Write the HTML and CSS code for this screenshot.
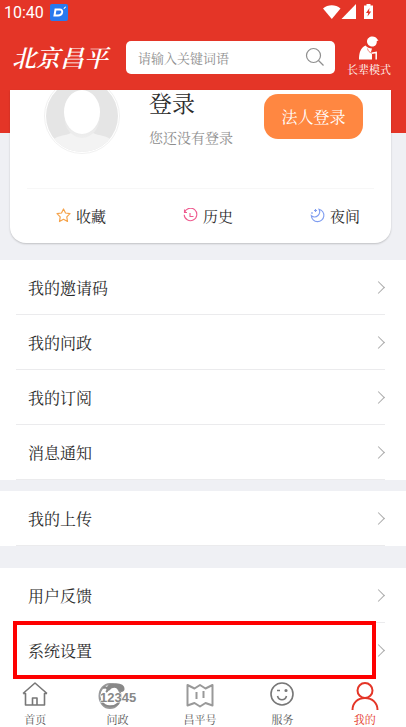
FILE: index.html
```
<!DOCTYPE html>
<html lang="zh-CN">

<head>
    <meta charset="UTF-8">
    <meta name="viewport" content="width=device-width, initial-scale=1">
    <title>北京昌平</title>
    <link rel="stylesheet" href="styles.css">
</head>

<body>
    <header class="top">
        <div class="status-bar">
            <span>10:40</span>
            <svg class="status-app" width="18" height="17" viewBox="0 0 18 17">
                <rect width="18" height="17" rx="2" fill="#2879ee"/>
                <path d="M5.500 5.500h4.200c2 0 2.800 1 2.400 3-.5 2.200-1.800 3-4 3H4.500z" fill="none" stroke="#fff" stroke-width="2"/>
                <path d="M14 5l.5-1.500 1.500-.5" fill="none" stroke="#fff"/>
            </svg>
            <svg class="status-icons" width="52" height="16" viewBox="0 0 52 16">
                <path d="M0 4.500C5 .2 12.500 .2 17.500 4.500L8.800 15z" fill="#fff"/>
                <path d="M33 0v15H18.500z" fill="#fff"/>
                <path d="M43.500 0h4v1.500H50V15h-9V1.500h2.500z" fill="#fff"/>
                <path d="M46.500 4l-3.500 5h2.200l-.7 3.500L48.200 7.500H46z" fill="#e43527"/>
            </svg>
        </div>
        <div class="toolbar">
            <h1 class="logo">北京昌平</h1>
            <form class="search">
                <input type="search" placeholder="请输入关键词语" aria-label="搜索">
                <button type="submit" aria-label="搜索">
                    <svg width="20" height="20" viewBox="0 0 20 20" fill="none" stroke="#8e8e8e" stroke-width="1.200">
                        <circle cx="8.500" cy="8.500" r="7"/>
                        <path d="M13.500 13.500l5 5"/>
                    </svg>
                </button>
            </form>
            <button type="button" class="elder">
                <svg width="20" height="24" viewBox="0 0 20 24" fill="#fff">
                    <path d="M8 5.500C8 2.500 10.500 .5 13.500 .5c2.300 0 4 .9 4.600 2.500l1.400 1.500-1.700.5c.2 3.300-1.600 5.500-4.300 5.500S8 8.500 8 5.500z"/>
                    <path d="M6.500 9.500c1.500 2 4 3 6.500 3l-1 3.500 1 2.500v5H0C0 17 1.500 12 6.500 9.500z"/>
                    <path d="M12.500 17.300l4.700-.8v7" fill="none" stroke="#fff" stroke-width="1.500"/>
                    <path d="M8.500 12.500c.5 2.500 2 4 4 4.500" fill="none" stroke="#e43527" stroke-width=".6"/>
                </svg>
                长辈模式
            </button>
        </div>
    </header>

    <main>
        <section class="profile">
            <div class="card">
                <div class="user">
                    <svg class="avatar" width="76" height="64" viewBox="0 12 76 64">
                        <defs>
                            <clipPath id="face"><circle cx="38" cy="38" r="36"/></clipPath>
                            <linearGradient id="shade" x1="0" y1="0" x2="0" y2="1">
                                <stop offset="0" stop-color="#dedede"/>
                                <stop offset="1" stop-color="#eeeeee"/>
                            </linearGradient>
                        </defs>
                        <circle cx="38" cy="38" r="37.500" fill="#fff" stroke="#f1f1f1"/>
                        <g clip-path="url(#face)">
                            <rect width="76" height="76" fill="#e5e5e5"/>
                            <path d="M28 46h20v8c3 4 13 2 19 8v14H9V62c6-6 16-4 19-8z" fill="#f3f3f3"/>
                            <ellipse cx="38" cy="38" rx="18" ry="22" fill="url(#shade)"/>
                            <ellipse cx="38" cy="34" rx="18" ry="22" fill="#fff"/>
                        </g>
                    </svg>
                    <div class="who">
                        <h2>登录</h2>
                        <p>您还没有登录</p>
                    </div>
                    <button type="button" class="corp-login">法人登录</button>
                </div>
                <nav class="quick">
                    <a href="#fav">
                        <svg width="15" height="15" viewBox="0 0 15 15" fill="none" stroke="#f5a34b" stroke-width="1.200" stroke-linejoin="round">
                            <path d="M7.500 1l2 4 4.500.7-3.200 3.200.7 4.600-4-2.200-4 2.200.7-4.600L1 5.700 5.500 5z"/>
                        </svg>
                        收藏
                    </a>
                    <a href="#history">
                        <svg width="15" height="15" viewBox="0 0 15 15" fill="none" stroke="#ee5a8e" stroke-width="1.100">
                            <path d="M1.500 4.500a6.300 6.300 0 1 1-.3 2.200M1.500 1.500v3H4M7 5v3.500h3.500"/>
                        </svg>
                        历史
                    </a>
                    <a href="#night">
                        <svg width="15" height="15" viewBox="0 0 15 15" fill="none" stroke="#7f9df0" stroke-width="1.100">
                            <path d="M9 1.200a6.300 6.300 0 1 1-7.700 6.500C3 9.500 6 9.500 8 7.500S10 3 9 1.200zM5.500 1v3M4 2.500h3M2 4v2"/>
                        </svg>
                        夜间
                    </a>
                </nav>
            </div>
        </section>

        <ul class="menu">
            <li><a href="#invite">我的邀请码</a></li>
            <li><a href="#ask">我的问政</a></li>
            <li><a href="#subscribe">我的订阅</a></li>
            <li><a href="#message">消息通知</a></li>
        </ul>
        <ul class="menu upload">
            <li><a href="#upload">我的上传</a></li>
        </ul>
        <ul class="menu">
            <li><a href="#feedback">用户反馈</a></li>
            <li class="marked"><a href="#settings">系统设置</a></li>
        </ul>
    </main>

    <nav class="tabs">
        <a href="#home">
            <svg width="28" height="26" viewBox="0 0 28 26" fill="none" stroke="#777" stroke-width="1.600" stroke-linejoin="round">
                <path d="M2 11.500L14 1l12 10.500M2 11.500h2.500V23h19V11.500H26M11.500 23v-7h4.500v7"/>
            </svg>
            首页
        </a>
        <a href="#politics">
            <svg width="40" height="28" viewBox="0 0 40 28">
                <ellipse cx="12" cy="14" rx="10.500" ry="12" fill="none" stroke="#999" stroke-width="2"/>
                <path d="M9 7C8 3 13 1 18 1.200c5 .2 9 2 8.500 6.300-.5 3-4.500 3-5.500 1C19 5 14 5 12 8c-1.500 1.500-3 .5-3-1z" fill="#888"/>
                <path d="M5 6c4-2 6 2 3 4M4 20c3 5 11 6 17 1" fill="none" stroke="#888" stroke-width="2"/>
                <text class="hotline" x="2" y="20">12345</text>
            </svg>
            问政
        </a>
        <a href="#changping">
            <svg width="30" height="26" viewBox="0 0 30 26" fill="none" stroke="#999" stroke-width="2" stroke-linejoin="round">
                <path d="M2.500 3l7 3.500L15 3l5.500 3.500 7-3.500v20.500l-7-2.500L15 24.500 9.500 21l-7 2.500zM11.500 10v7M18.500 9v7"/>
            </svg>
            昌平号
        </a>
        <a href="#service">
            <svg width="26" height="26" viewBox="0 0 26 26" fill="none" stroke="#777" stroke-width="1.600">
                <circle cx="13" cy="12" r="11"/>
                <path d="M8.500 14c1.500 5 7.500 5 9 0M8 8.500h3"/>
                <circle cx="17" cy="8.500" r=".8"/>
            </svg>
            服务
        </a>
        <a href="#mine" class="active">
            <svg width="28" height="30" viewBox="0 0 28 30" fill="none" stroke="#e43527" stroke-width="2">
                <circle cx="14" cy="8.500" r="7.500"/>
                <path d="M1.500 28c0-7 5-12 12.500-12s12.500 5 12.500 12"/>
            </svg>
            我的
        </a>
    </nav>
</body>

</html>
```
FILE: styles.css
```
* {
    box-sizing: border-box;
}

body {
    margin: 0;
    background: #eff0f4;
    color: #2b2b2b;
    font-family: "Noto Serif CJK SC", "Noto Sans CJK SC", serif;
    font-size: 16px;
    overflow: hidden;
}

h1, h2, p, ul {
    margin: 0;
    padding: 0;
    font-weight: inherit;
}

ul {
    list-style: none;
}

a {
    color: inherit;
    text-decoration: none;
}

button {
    border: none;
    padding: 0;
    font: inherit;
    cursor: pointer;
}

svg {
    display: block;
    flex: none;
}

/* header */
.top {
    height: 90px;
    background: #e43527;
    color: #fff;
}

.status-bar {
    display: flex;
    align-items: center;
    height: 24px;
    padding: 0 31px 0 4px;
    font-family: Roboto, sans-serif;
    font-size: 16px;
}

.status-app {
    margin-left: 6px;
}

.status-icons {
    margin-left: auto;
}

.toolbar {
    display: flex;
    align-items: center;
    height: 66px;
    padding: 0 15px 0 12px;
}

.logo {
    width: 114px;
    font-size: 24px;
    font-weight: 600;
    font-style: italic;
    line-height: 32px;
    white-space: nowrap;
}

.search {
    display: flex;
    flex: 1;
    align-items: center;
    height: 33px;
    margin-right: 12px;
    padding: 0 10px 0 12px;
    background: #fff;
    border-radius: 5px;
}

.search input {
    flex: 1;
    min-width: 0;
    padding: 0;
    border: none;
    outline: none;
    background: none;
    font: inherit;
    font-size: 13px;
}

.search input::placeholder {
    color: #8e8e8e;
}

.search button {
    background: none;
}

.elder {
    display: flex;
    flex-direction: column;
    align-items: center;
    background: none;
    color: #fff;
    font-size: 11px;
    line-height: 18px;
    white-space: nowrap;
}

/* profile card */
.profile {
    padding: 0 15px 17px 10px;
    background: linear-gradient(#e43527 43px, #eff0f4 43px);
}

.card {
    height: 153px;
    background: #fff;
    border-radius: 0 0 16px 16px;
    box-shadow: 0 1px 2px rgba(0, 0, 0, 0.2);
}

.user {
    display: flex;
    height: 99px;
    margin: 0 17px;
    padding-right: 11px;
    border-bottom: 1px solid #f7f7f7;
}

.avatar {
    margin: 0 29px 0 17px;
}

.who {
    flex: 1;
}

.who h2 {
    font-size: 23px;
    line-height: 26px;
}

.who p {
    margin-top: 11px;
    color: #8e8e8e;
    font-size: 14px;
    line-height: 20px;
}

.corp-login {
    width: 99px;
    height: 45px;
    margin-top: 4px;
    background: #ff8741;
    border-radius: 14px;
    color: #fff;
}

.quick {
    display: grid;
    grid-template-columns: repeat(3, 1fr);
    height: 53px;
}

.quick a {
    display: flex;
    align-items: center;
    gap: 5px;
    padding-left: 46px;
    font-size: 15px;
}

/* menu lists */
.menu {
    margin-bottom: 11px;
    background: #fff;
}

.menu.upload {
    margin-bottom: 22px;
}

.menu:last-child {
    margin-bottom: 0;
}

.menu a {
    display: flex;
    align-items: center;
    justify-content: space-between;
    height: 55px;
    margin: 0 21px 0 16px;
    padding-left: 12px;
    border-bottom: 1px solid #ebebed;
}

.menu a::after {
    content: "";
    width: 8px;
    height: 8px;
    margin-right: 2px;
    border: solid #aaa;
    border-width: 1px 1px 0 0;
    transform: rotate(45deg);
}

.menu .marked {
    position: relative;
}

.marked a {
    border-bottom-color: #fff;
}

.marked::after {
    content: "";
    position: absolute;
    inset: -2px 30px -1px 13px;
    border: 4px solid #fe0000;
}

/* bottom tabs */
.tabs {
    display: grid;
    grid-template-columns: repeat(5, 1fr);
    height: 49px;
    margin-left: -6px;
    background: #fff;
}

.tabs a {
    display: flex;
    flex-direction: column;
    align-items: center;
    justify-content: space-between;
    padding-top: 4px;
    color: #555;
    font-size: 11px;
    line-height: 15px;
}

.tabs .active {
    color: #e43527;
}

.hotline {
    fill: #888;
    stroke: #fff;
    stroke-width: 1px;
    paint-order: stroke;
    font: bold 13px "Liberation Sans", sans-serif;
}
```
